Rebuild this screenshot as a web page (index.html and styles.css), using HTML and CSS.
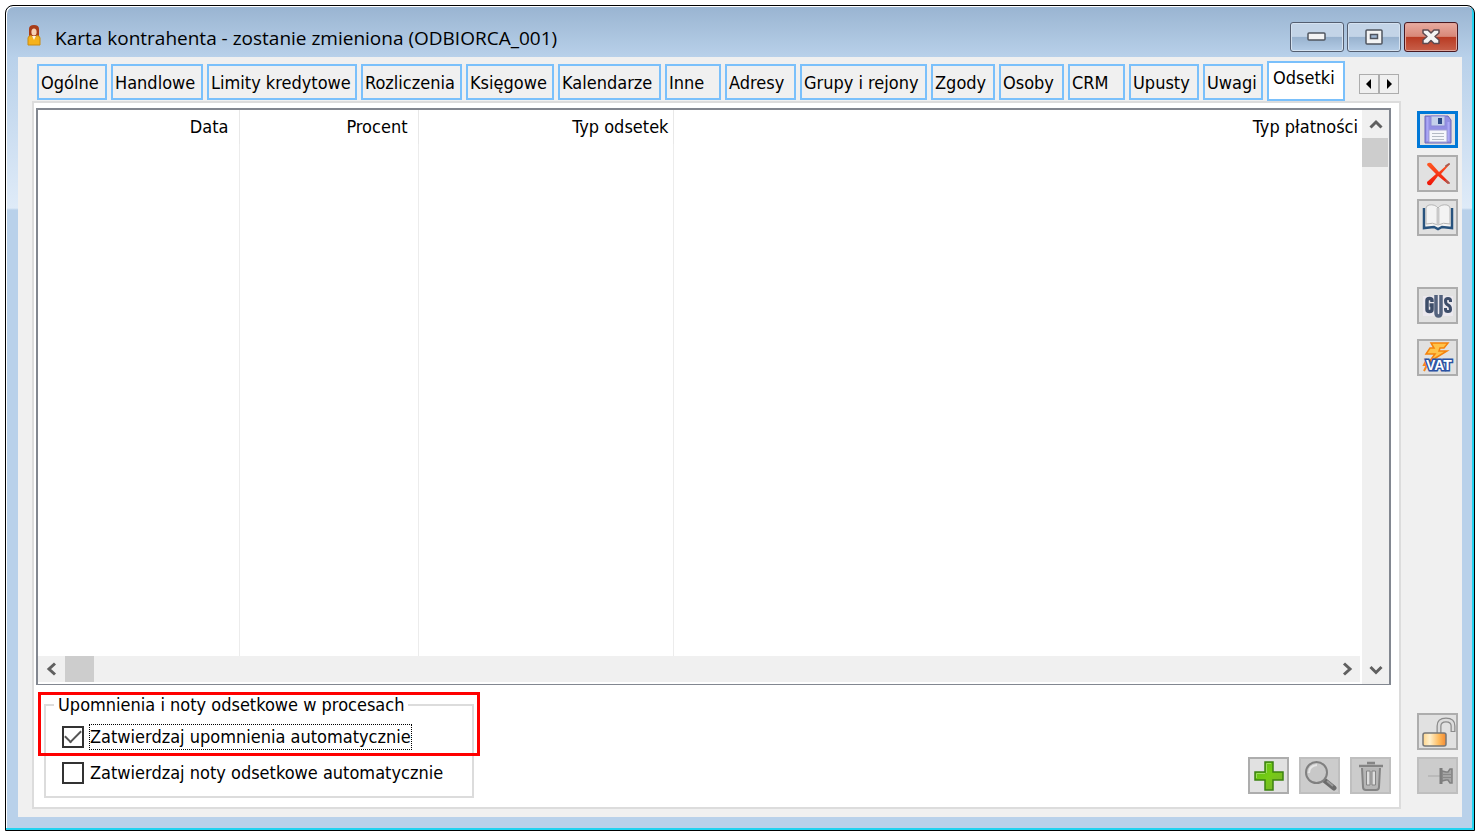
FILE: index.html
```
<!DOCTYPE html>
<html lang="pl">
<head>
<meta charset="utf-8">
<title>Karta kontrahenta</title>
<link rel="stylesheet" href="styles.css">
</head>
<body>
<main class="window">
  <header class="titlebar">
    <svg class="app-icon" width="14" height="24" viewBox="0 0 14 24" aria-hidden="true">
      <path d="M2 12V5Q2 1 7 1t5 4v7z" fill="#a83c18"/>
      <ellipse cx="7" cy="8" rx="2.6" ry="3.6" fill="#f6d2b4"/>
      <path d="M1 21v-7q0-2 3-2.500l3 2.500 3-2.500q3 .5 3 2.500v7z" fill="#f5b21c" stroke="#c98a10"/>
      <path d="M5 12l2 4 2-4z" fill="#fff3dc"/>
    </svg>
    <h1 class="title">Karta kontrahenta - zostanie zmieniona (ODBIORCA_001)</h1>
    <div class="caption-buttons">
      <button class="caption" type="button" aria-label="Minimalizuj"><svg width="20" height="10" viewBox="0 0 20 10"><rect x="1" y="1" width="17" height="7" rx="1" fill="#f4f4f4" stroke="#50555f" stroke-width="1.500"/></svg></button>
      <button class="caption" type="button" aria-label="Maksymalizuj"><svg width="20" height="18" viewBox="0 0 20 18"><rect x="2" y="2" width="16" height="14" rx="1" fill="#f4f4f4" stroke="#50555f" stroke-width="1.500"/><rect x="6.500" y="6.500" width="7" height="4" fill="#9fb6d2" stroke="#50555f" stroke-width="1.500"/></svg></button>
      <button class="caption caption-close" type="button" aria-label="Zamknij"><svg width="20" height="18" viewBox="0 0 20 18"><path d="M2 2h5l3 3L13 2h5v3l-4 3.500 4 3.500v3.500h-5l-3-3-3 3H2V12l4-3.500L2 5z" fill="#f4f4f4" stroke="#5d4a50" stroke-width="1.500" stroke-linejoin="round"/></svg></button>
    </div>
  </header>

  <div class="client">
    <div class="content">
      <div class="tab-row">
        <nav class="tabs" role="tablist">
          <button class="tab" role="tab" type="button">Ogólne</button>
          <button class="tab" role="tab" type="button">Handlowe</button>
          <button class="tab" role="tab" type="button">Limity kredytowe</button>
          <button class="tab" role="tab" type="button">Rozliczenia</button>
          <button class="tab" role="tab" type="button">Księgowe</button>
          <button class="tab" role="tab" type="button">Kalendarze</button>
          <button class="tab" role="tab" type="button">Inne</button>
          <button class="tab" role="tab" type="button">Adresy</button>
          <button class="tab" role="tab" type="button">Grupy i rejony</button>
          <button class="tab" role="tab" type="button">Zgody</button>
          <button class="tab" role="tab" type="button">Osoby</button>
          <button class="tab" role="tab" type="button">CRM</button>
          <button class="tab" role="tab" type="button">Upusty</button>
          <button class="tab" role="tab" type="button">Uwagi</button>
          <button class="tab tab-active" role="tab" type="button" aria-selected="true">Odsetki</button>
        </nav>
        <div class="tab-scroll">
          <button class="spin" type="button" aria-label="Poprzednie karty"><svg width="8" height="12" viewBox="0 0 8 12"><path d="M6 1v10L1 6z"/></svg></button>
          <button class="spin" type="button" aria-label="Następne karty"><svg width="8" height="12" viewBox="0 0 8 12"><path d="M2 1v10l5-5z"/></svg></button>
        </div>
      </div>

      <section class="page">
        <div class="list">
          <table class="grid">
            <colgroup><col class="col-date"><col class="col-percent"><col class="col-type"><col></colgroup>
            <thead><tr><th>Data</th><th>Procent</th><th class="tight">Typ odsetek</th><th class="tight">Typ płatności</th></tr></thead>
            <tbody><tr><td></td><td></td><td></td><td></td></tr></tbody>
          </table>
          <div class="vbar">
            <button class="arrow" type="button" aria-label="W górę"><svg width="14" height="12" viewBox="0 0 14 12"><path d="M1.500 9.500L7 4l5.500 5.500"/></svg></button>
            <div class="thumb"></div>
          </div>
          <div class="hbar">
            <button class="arrow" type="button" aria-label="W lewo"><svg width="12" height="14" viewBox="0 0 12 14"><path d="M9 1.500L3 7l6 5.500"/></svg></button>
            <div class="thumb"></div>
            <button class="arrow arrow-end" type="button" aria-label="W prawo"><svg width="12" height="14" viewBox="0 0 12 14"><path d="M3 1.500L9 7l-6 5.500"/></svg></button>
          </div>
          <button class="arrow arrow-down" type="button" aria-label="W dół"><svg width="14" height="12" viewBox="0 0 14 12"><path d="M1.500 3L7 8.500 12.500 3"/></svg></button>
        </div>

        <div class="page-footer">
          <div class="group">
            <fieldset class="options">
              <legend>Upomnienia i noty odsetkowe w procesach</legend>
              <label class="option"><input class="check" type="checkbox" checked><span class="option-text focused">Zatwierdzaj upomnienia automatycznie</span></label>
              <label class="option"><input class="check" type="checkbox"><span class="option-text">Zatwierdzaj noty odsetkowe automatycznie</span></label>
            </fieldset>
            <div class="highlight"></div>
          </div>
          <div class="actions">
            <button class="tool" type="button" aria-label="Dodaj"><svg width="32" height="32" viewBox="0 0 32 32"><defs><linearGradient id="green" x1="0" y1="0" x2="1" y2="1"><stop offset="0" stop-color="#5cbc16"/><stop offset=".5" stop-color="#76cc14"/><stop offset="1" stop-color="#7cab38"/></linearGradient></defs><path d="M12 2h8v10h10v8H20v10h-8V20H2v-8h10z" fill="url(#green)" stroke="#3c8210" stroke-width="1.500"/><path d="M13.500 13V3.500H18M3.500 18v-4.500H12" fill="none" stroke="#9ddc5c"/></svg></button>
            <button class="tool" type="button" disabled aria-label="Podgląd"><svg width="34" height="32" viewBox="0 0 34 32"><path d="M21 20l10 8" stroke="#6b6b6b" stroke-width="5" stroke-linecap="round"/><path d="M24 21l6 5" stroke="#9a9a9a" stroke-width="2"/><circle cx="13.500" cy="12.500" r="10.500" fill="#c8c8c8" stroke="#808080" stroke-width="2"/><path d="M6 13q0-7 8-8" fill="none" stroke="#e6e6e6" stroke-width="2"/></svg></button>
            <button class="tool" type="button" disabled aria-label="Usuń"><svg width="28" height="32" viewBox="0 0 28 32" fill="none" stroke="#848484"><path d="M5 8l1 19q0 3 3 3h10q3 0 3-3l1-19" fill="#b5b5b5" stroke-width="2"/><path d="M2 6h24M10 3h8" stroke-width="2.500"/><path d="M9.500 11h3.500v14H9.500zM15 11h3.500v14H15z" fill="#dedede"/></svg></button>
          </div>
        </div>
      </section>
    </div>

    <aside class="sidebar">
      <button class="tool tool-default" type="button" aria-label="Zapisz"><svg width="28" height="29" viewBox="0 0 28 29"><path d="M1 1h23l3 4v23H1z" fill="#938fe4" stroke="#6a67b8"/><path d="M3.500 2v24M24.500 7v19" stroke="#aca8f6" stroke-width="2"/><path d="M7 1h14v10H7z" fill="#c5d0ea" stroke="#8d8ad6"/><path d="M14 3h4v6h-4z" fill="#2d4a86"/><path d="M5 15h18v12H5z" fill="#f5f6fb" stroke="#a3a1d4"/><path d="M8 18.500h12M8 21.500h12M8 24.500h12" stroke="#b4bac4"/></svg></button>
      <button class="tool" type="button" aria-label="Anuluj"><svg width="28" height="26" viewBox="0 0 28 26"><defs><linearGradient id="red" x1="0" y1="0" x2="0" y2="1"><stop offset="0" stop-color="#ff5a24"/><stop offset="1" stop-color="#ee1408"/></linearGradient></defs><path d="M3 4q0-3 4-2l8 9 8-7 3-1-9 10 8 8-1 2-10-8-7 9q-4 1-4-3l9-8z" fill="url(#red)"/><path d="M22 5l3-2M22 20l3 2" stroke="#a95a50" stroke-width="2" stroke-linecap="round"/></svg></button>
      <button class="tool" type="button" aria-label="Katalog"><svg width="32" height="27" viewBox="0 0 32 27"><path d="M2 4v20l10-1 4 2 4-2 10 1V4" fill="#f4f4f4" stroke="#28537e" stroke-width="2.500"/><path d="M4 4q0-2 3-3 6-1 9 3v17q-5-3-12-1zM28 4q0-2-3-3-6-1-9 3v17q5-3 12-1z" fill="#f3f3f3" stroke="#b4b4b4"/><path d="M16 4v17" stroke="#c9c9c9" stroke-width="3"/></svg></button>
      <button class="tool tool-gus" type="button" aria-label="GUS"><svg width="32" height="28" viewBox="0 0 32 28" fill="none" stroke="#3d4d69" stroke-width="3.500"><path d="M1 4h30v20H1z" fill="#ebe8ee" stroke="none"/><path d="M10 10V8.500q0-2-2.500-2T5 8.500v9q0 2 2.500 2t2.500-2V13H7.500"/><path d="M14 3v18q0 3 2.500 3t2.500-3V3" stroke="#53627d"/><path d="M28.500 10V8.500q0-2-2.500-2t-2.500 2Q23.500 12 26 13t2.500 4.500q0 2-2.500 2t-2.500-2V16" stroke-width="3"/></svg></button>
      <button class="tool tool-vat" type="button" aria-label="VAT"><svg width="34" height="31" viewBox="0 0 34 31"><path d="M10 1h17l-4 5h-4l-1 3h8L8 20l6-8H5l4-6h4z" fill="#ffc34a" stroke="#f5820b" stroke-width="1.500"/><path d="M6 17l-3 6h3l-3 6" fill="none" stroke="#f58a1c" stroke-width="2"/><text x="5" y="28" class="vat-text">VAT</text></svg></button>
      <button class="tool tool-lock" type="button" aria-label="Odblokuj"><svg width="36" height="32" viewBox="0 0 36 32"><defs><linearGradient id="gold"><stop offset="0" stop-color="#ffd58c"/><stop offset=".3" stop-color="#fff0cc"/><stop offset=".7" stop-color="#ffb95a"/><stop offset="1" stop-color="#f28a34"/></linearGradient></defs><path d="M19 17v-7q0-6 7-6t7 6v6" fill="none" stroke="#8b8b8b" stroke-width="5"/><path d="M19 17v-7q0-6 7-6t7 6v5" fill="none" stroke="#dcdcdc" stroke-width="2.500"/><rect x="3" y="17" width="23" height="13" rx="2" fill="url(#gold)" stroke="#777" stroke-width="1.500"/></svg></button>
      <button class="tool" type="button" disabled aria-label="Przypnij"><svg width="32" height="22" viewBox="0 0 32 22"><path d="M6 11h12" stroke="#b4b4b4" stroke-width="1.500"/><path d="M19 3v16" stroke="#7c7c7c" stroke-width="3"/><path d="M20 6l4 1h2l2-3h2v14h-2l-2-3h-2l-4 1z" fill="#a5a5a5" stroke="#808080" stroke-width="1.500"/><path d="M21 9.500h8M21 12.500h8" stroke="#888"/></svg></button>
    </aside>
  </div>
</main>
</body>
</html>
```
FILE: styles.css
```
* { box-sizing: border-box; }

body {
  margin: 0;
  padding: 5px 4px 4px 5px;
  min-height: 100vh;
  display: flex;
  background: #fff;
  color: #000;
  font: 18px/24px "DejaVu Sans Condensed", "DejaVu Sans", sans-serif;
}

button {
  margin: 0;
  padding: 0;
  color: inherit;
  font: inherit;
}

svg { display: block; flex: none; }

.window {
  flex: 1;
  display: flex;
  flex-direction: column;
  padding: 0 12px 13px 12px;
  border: 1px solid #000;
  border-radius: 8px 8px 0 0;
  background:
    linear-gradient(#99b4d1, #b9d1ea 52px, #dfebf8 202px, #b9d1ea 204px);
  box-shadow: inset -2px -2px #22d3f0, inset 1px 1px #fff;
}

.titlebar {
  height: 51px;
  display: flex;
  align-items: center;
  padding: 12px 4px 0 9px;
}

.app-icon { margin: 0 14px 4px 0; }

.title {
  flex: 1;
  margin: 0;
  font: 19px/26px "Open Sans", "Noto Sans", sans-serif;
}

.caption-buttons {
  display: flex;
  gap: 3px;
  padding-bottom: 2px;
}

.caption {
  width: 54px;
  height: 30px;
  display: grid;
  place-items: center;
  border: 1px solid #545e70;
  border-radius: 3px;
  background: linear-gradient(#c3d4e7 48%, #98b2ce 50%, #b4cce6);
  box-shadow: inset 0 0 0 1px #d5e2f0;
}

.caption-close {
  border-color: #4a1820;
  background: linear-gradient(#e8aba0 0, #d88878 48%, #b83a22 50%, #c8604a);
  box-shadow: inset 0 0 0 1px #e0a59a;
}

.client {
  flex: 1;
  display: flex;
  background: #f0f0f0;
}

.content {
  flex: 1;
  min-width: 0;
  display: flex;
  flex-direction: column;
  padding: 4px 0 8px 14px;
}

.tab-row {
  display: flex;
  align-items: center;
  gap: 14px;
  padding: 0 2px 0 5px;
}

.tabs {
  flex: 1;
  min-width: 0;
  display: grid;
  grid-template-columns: 70fr 92fr 150fr 101fr 88fr 103fr 56fr 71fr 127fr 64fr 65fr 57fr 70fr 60fr 78fr;
  gap: 4px;
  align-items: end;
  height: 40px;
}

.tab {
  min-width: 0;
  height: 36px;
  margin-bottom: 1px;
  padding: 1px 0 0 2px;
  border: 2px solid #7ac0fb;
  background: #f0f0f0;
  text-align: left;
  white-space: nowrap;
}

.tab-active {
  height: 40px;
  margin-bottom: 0;
  padding: 0 0 7px 4px;
  background: #fff;
}

.tab-scroll {
  display: flex;
  padding-top: 6px;
}

.spin {
  width: 20px;
  height: 20px;
  display: grid;
  place-items: center;
  border: 1px solid #adadad;
  background: #f0f0f0;
}

.page {
  flex: 1;
  display: flex;
  flex-direction: column;
  padding: 5px 8px 9px 2px;
  border: 2px solid #dcdcdc;
  background: #fff;
}

.list {
  flex: 1;
  display: grid;
  grid-template-columns: 1fr 27px;
  grid-template-rows: 1fr 28px;
  border: 2px solid #828790;
  border-bottom-width: 1px;
  background: #fff;
}

.grid {
  width: 100%;
  height: 100%;
  table-layout: fixed;
  border-collapse: collapse;
}

.col-date { width: 201px; }
.col-percent { width: 179px; }
.col-type { width: 255px; }

.grid th {
  height: 34px;
  padding: 0 10px 0 0;
  border-right: 1px solid #e8e8e8;
  font-weight: 400;
  text-align: right;
}

.grid th.tight { padding-right: 4px; }
.grid td { border-right: 1px solid #ececec; }
.grid th:last-child, .grid td:last-child { border-right: 0; }

.vbar, .hbar { display: flex; background: #f0f0f0; }
.vbar { flex-direction: column; }
.hbar { margin: 0 2px 2px 0; }

.thumb { background: #cdcdcd; }
.vbar .thumb { height: 29px; margin-right: 1px; }
.hbar .thumb { width: 29px; }

.arrow {
  width: 27px;
  display: grid;
  place-items: center;
  border: 0;
  background: #f0f0f0;
}

.arrow path { fill: none; stroke: #606060; stroke-width: 3; }
.vbar .arrow { width: auto; height: 28px; }
.arrow-end { margin-left: auto; }
.arrow-down { width: auto; }

.page-footer {
  display: flex;
  justify-content: space-between;
  align-items: flex-end;
  padding-top: 8px;
}

.group {
  position: relative;
  padding-left: 8px;
}

.options {
  width: 430px;
  margin: 0;
  padding: 7px 0 10px 16px;
  border: 2px solid #dcdcdc;
}

.options legend {
  margin-left: -8px;
  padding: 0 4px;
}

.option {
  display: flex;
  align-items: center;
  gap: 5px;
}

.option + .option { margin-top: 10px; }

.check {
  appearance: none;
  width: 22px;
  height: 22px;
  margin: 0;
  display: grid;
  place-items: center;
  border: 2px solid #333;
  background: #fff;
}

.check:checked::before {
  content: "";
  width: 14px;
  height: 7px;
  margin-bottom: 5px;
  border: solid #555;
  border-width: 0 0 2px 2px;
  transform: rotate(-45deg);
}

.option-text { border: 1px solid transparent; }
.focused { border: 1px dotted #000; }

.highlight {
  position: absolute;
  top: -1px;
  left: 2px;
  width: 442px;
  height: 64px;
  border: 3px solid #f00;
  pointer-events: none;
}

.actions {
  display: flex;
  gap: 10px;
  padding-bottom: 4px;
}

.tool {
  width: 41px;
  height: 37px;
  display: grid;
  place-items: center;
  border: 2px solid #adadad;
  background: #e1e1e1;
}

.tool:disabled {
  border-color: #bfbfbf;
  background: #ccc;
}

.tool-default { border: 3px solid #0078d7; }

.sidebar {
  display: flex;
  flex-direction: column;
  gap: 7px;
  padding: 54px 4px 23px 16px;
}

.tool-gus { margin-top: 44px; }
.tool-vat { margin-top: 8px; }
.tool-lock { margin-top: auto; }

.vat-text {
  fill: #fff;
  stroke: #2952a3;
  stroke-width: 3px;
  paint-order: stroke;
  font: bold 14px "Liberation Sans", sans-serif;
}
```
